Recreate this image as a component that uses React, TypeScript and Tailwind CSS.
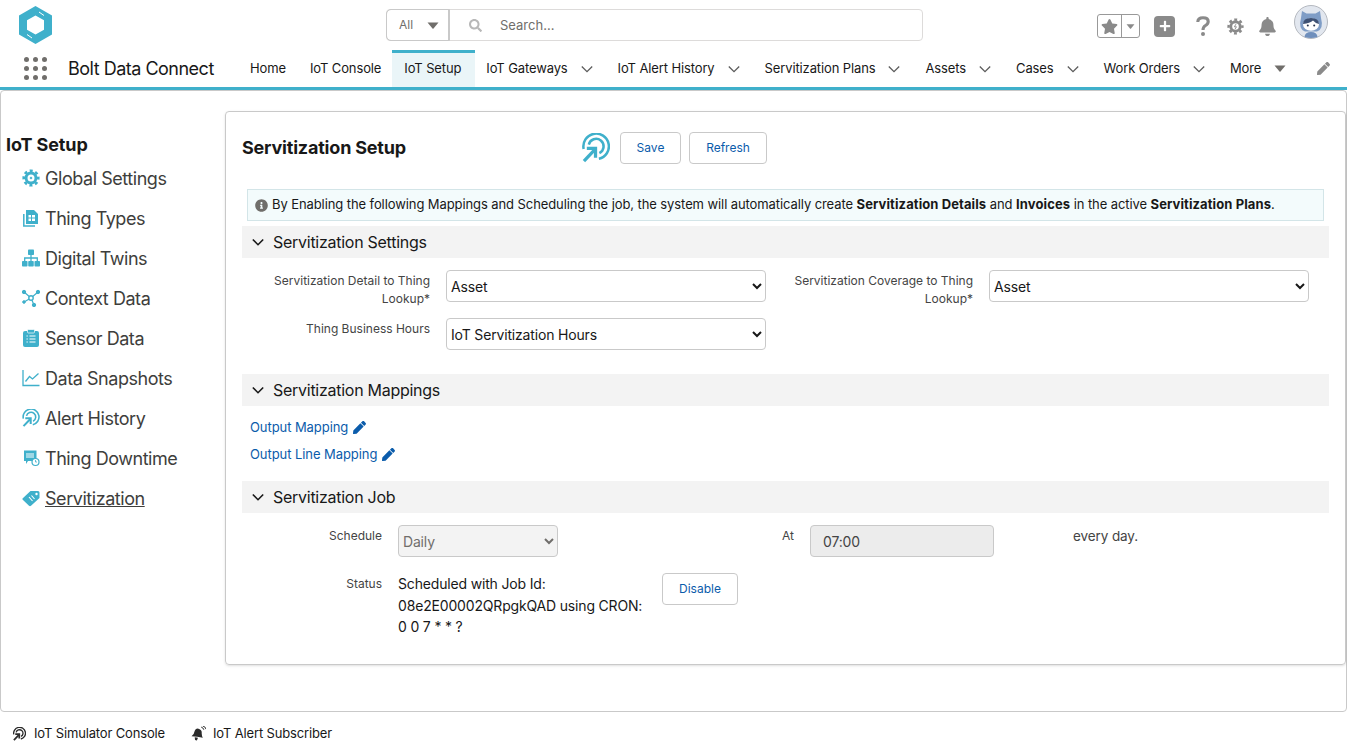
import React from "react";
import { FaBell, FaPen, FaInfoCircle, FaSearch, FaPlus, FaStar } from "react-icons/fa";

const teal = "#3fb0cb";

function Radar({ className = "", color = teal, sw = 2.6 }: { className?: string; color?: string; sw?: number }) {
  return (
    <svg viewBox="0 0 29 30" className={className} fill="none" stroke={color}>
      <path d="M1.700 16 A13.200 13.200 0 1 1 17.500 26.200" strokeWidth={sw} />
      <path d="M7 11.500 A7.800 7.800 0 1 1 18 20.300" strokeWidth={sw} />
      <path d="M2 28.500 L13 17" strokeWidth={sw * 1.3} />
      <path d="M5 15.500 H14 V25" strokeWidth={sw * 1.3} />
    </svg>
  );
}

function Gear({ className = "", color = teal, bolt }: { className?: string; color?: string; bolt?: boolean }) {
  return (
    <svg viewBox="0 0 18 18" className={className} fill="none" stroke={color}>
      <circle cx="9" cy="9" r="7.300" strokeWidth="2.600" strokeDasharray="3 2.730" strokeDashoffset="1.500" />
      <circle cx="9" cy="9" r="5" strokeWidth="3" />
      {bolt ? (
        <path d="M9.500 6.500 L7.800 9.300 H10 L8.500 11.800" strokeWidth="1" />
      ) : (
        <circle cx="9" cy="9" r="1" fill={color} strokeWidth="0.500" />
      )}
    </svg>
  );
}

function Triangle({ className = "", color = "#706e6b" }: { className?: string; color?: string }) {
  return (
    <svg viewBox="0 0 12 7" className={className} fill={color}>
      <path d="M0.500 0.500 H11.500 L6.500 6.500 Q6 7 5.500 6.500 Z" />
    </svg>
  );
}

function Logo() {
  return (
    <svg viewBox="0 0 33 38" className="w-[33px] h-[38px]">
      <path fillRule="evenodd" fill={teal} d="M16.500 0 L33 9.500 V28.500 L16.500 38 L0 28.500 V9.500 Z M16.500 9.500 L8 14.300 V23.700 L16.500 28.500 L25 23.700 V14.300 Z" />
      <path d="M20 6 L25 9.500 M13 32 L8 28.500" stroke="#ffffff" strokeWidth="1" />
    </svg>
  );
}

function Launcher() {
  const dots = [0, 1, 2, 3, 4, 5, 6, 7, 8];
  return (
    <div className="grid grid-cols-3 gap-x-[4px] gap-y-[4px] w-[23px]">
      {dots.map((d) => (
        <span key={d} className="w-[5px] h-[5px] rounded-full bg-[#706e6b]" />
      ))}
    </div>
  );
}

function Avatar() {
  return (
    <svg viewBox="0 0 34 34" className="w-[34px] h-[34px]">
      <circle cx="17" cy="17" r="16.500" fill="#e2e7ef" stroke="#b4b8bf" />
      <path d="M8 6 L12.500 8.500 H21.500 L26 6 L27 13 Q30 24 23 26.500 H11 Q4 24 7 13 Z" fill="#7f9dc6" />
      <ellipse cx="17" cy="19.500" rx="8" ry="6.200" fill="#ffffff" />
      <path d="M9 19 Q9 13 17 13 Q25 13 25 19 Q21 18 19 15.500 Q16 18 9 19 Z" fill="#3f5274" />
      <circle cx="13.800" cy="20.500" r="1" fill="#26324b" />
      <circle cx="20.200" cy="20.500" r="1" fill="#26324b" />
      <path d="M10.500 32 Q11 27 17 27 Q23 27 23.500 32 Q17 34 10.500 32 Z" fill="#6f8fbc" />
    </svg>
  );
}

function Chevron({ className = "", color = "#5c5c5c", sw = 1.300 }: { className?: string; color?: string; sw?: number }) {
  return (
    <svg viewBox="0 0 12 12" className={className} fill="none" stroke={color} strokeWidth={sw}>
      <path d="M0.800 3.500 L6 8.700 L11.200 3.500" />
    </svg>
  );
}

function NavItem({ label, chev, active, caret }: { label: string; chev?: boolean; active?: boolean; caret?: boolean }) {
  return (
    <div className={active ? "h-[37px] flex items-center px-3 pb-[3px] border-t-[3px] border-[#3fb0cb] bg-[#eaf5f8] w-[83px] mx-[-1px]" : "h-[37px] flex items-center px-3"}>
      <span className="text-[13px] leading-none tracking-[-0.12px] text-[#181818] whitespace-nowrap">{label}</span>
      {chev && <Chevron className="w-[12px] h-[12px] ml-[13px] mr-[1px]" />}
      {caret && <Triangle className="w-[12px] h-[7px] ml-[13px] mr-[1px]" />}
    </div>
  );
}

function SideIcon({ name }: { name: string }) {
  const c = "w-[18px] h-[18px]";
  switch (name) {
    case "gear":
      return <Gear className={c} />;
    case "types":
      return (
        <svg viewBox="0 0 18 18" className={c} fill={teal}>
          <path d="M4 1 H12 L16 5 V15 H4 Z M6.500 6 V8.500 H9 V6 Z M10 6 V8.500 H13 V6 Z M6.500 9.500 V12 H9 V9.500 Z M10 9.500 V12 H13 V9.500 Z" fillRule="evenodd" />
          <path d="M1.800 5 V17 H13" fill="none" stroke={teal} strokeWidth="1.500" />
        </svg>
      );
    case "twins":
      return (
        <svg viewBox="0 0 18 18" className={c} fill={teal}>
          <rect x="6" y="0.500" width="6" height="5.500" rx="0.800" />
          <rect x="0" y="12" width="5.500" height="5.500" rx="0.800" />
          <rect x="6.250" y="12" width="5.500" height="5.500" rx="0.800" />
          <rect x="12.500" y="12" width="5.500" height="5.500" rx="0.800" />
          <path d="M9 6 V12 M2.700 12 V9 H15.300 V12" fill="none" stroke={teal} strokeWidth="1.300" />
        </svg>
      );
    case "context":
      return (
        <svg viewBox="0 0 18 18" className={c} fill={teal} stroke={teal}>
          <path d="M2 3 L9 9 L16 3 M9 9 L12 16 M9 9 L2 13" strokeWidth="1.200" fill="none" />
          <circle cx="2" cy="3" r="1.700" />
          <circle cx="16" cy="3" r="1.700" />
          <circle cx="12" cy="16" r="1.700" />
          <circle cx="2" cy="13" r="1.300" />
          <circle cx="9" cy="9" r="2.200" fill="#ffffff" strokeWidth="1.400" />
        </svg>
      );
    case "sensor":
      return (
        <svg viewBox="0 0 18 18" className={c}>
          <rect x="1" y="2" width="16" height="16" rx="2" fill={teal} />
          <rect x="5.500" y="0.500" width="7" height="3.500" rx="1" fill={teal} stroke="#ffffff" strokeWidth="0.700" />
          <path d="M4.500 7 H5.800 M7.500 7 H13.500 M4.500 10 H5.800 M7.500 10 H13.500 M4.500 13 H5.800 M7.500 13 H13.500" stroke="#ffffff" strokeWidth="1.200" />
        </svg>
      );
    case "snap":
      return (
        <svg viewBox="0 0 18 18" className={c} fill="none" stroke={teal} strokeWidth="1.300">
          <path d="M1 1 V16.500 H17.500" />
          <path d="M3.500 12.500 L7.500 7.500 L10.500 10 L16.500 4.500" />
        </svg>
      );
    case "alert":
      return <Radar className={c} sw={2.600} />;
    case "down":
      return (
        <svg viewBox="0 0 18 18" className={c}>
          <path d="M2 1.500 H14.500 V12 H6 L4 15 V12 H2 Z" fill={teal} />
          <path d="M5 4 V9 M7 4 V9 M9 4 V9 M11 4 V9" stroke="#ffffff" strokeWidth="1" />
          <circle cx="13.500" cy="13" r="3.500" fill="#ffffff" stroke={teal} strokeWidth="1.200" />
          <path d="M13.500 11 V13 H15" fill="none" stroke={teal} strokeWidth="0.800" />
        </svg>
      );
    default:
      return (
        <svg viewBox="0 0 18 18" className={c}>
          <path d="M0.500 9.500 L8.500 2 H16 Q17.500 2 17.500 3.500 V9 L9 16.800 Q8 17.500 7 16.800 L1 11 Q0 10.200 0.500 9.500 Z" fill={teal} />
          <path d="M7 8 L10.500 12 M9.500 6.500 L12.500 10" stroke="#ffffff" strokeWidth="1.100" />
          <circle cx="14.500" cy="5" r="1.200" fill="#ffffff" />
        </svg>
      );
  }
}

const side: [string, string][] = [
  ["gear", "Global Settings"],
  ["types", "Thing Types"],
  ["twins", "Digital Twins"],
  ["context", "Context Data"],
  ["sensor", "Sensor Data"],
  ["snap", "Data Snapshots"],
  ["alert", "Alert History"],
  ["down", "Thing Downtime"],
  ["tag", "Servitization"],
];

function Btn({ label, w }: { label: string; w: string }) {
  return (
    <button className={`${w} h-[32px] rounded-[4px] border border-[#c9c9c9] bg-white text-[12px] text-[#0b5cab]`}>{label}</button>
  );
}

function Section({ label }: { label: string }) {
  return (
    <div className="h-[32px] bg-[#f3f3f3] flex items-center pl-[10px]">
      <Chevron className="w-[12px] h-[12px]" color="#181818" sw={1.600} />
      <span className="ml-[9px] text-[16px] tracking-[-0.27px] text-[#181818]">{label}</span>
    </div>
  );
}

function Sel({ value, w, disabled }: { value: string; w: string; disabled?: boolean }) {
  return (
    <select
      disabled={disabled}
      defaultValue={value}
      className={`${w} h-[32px] rounded-[4px] border border-[#c9c9c9] text-[14px] tracking-[-0.17px] ${disabled ? "bg-[#f3f3f3] text-[#706e6b]" : "bg-white text-[#181818]"}`}
      style={{ appearance: "auto" }}
    >
      <option>{value}</option>
    </select>
  );
}

function Label({ children, w }: { children: React.ReactNode; w: string }) {
  return <div className={`${w} text-right text-[12px] leading-[18px] text-[#444444] pt-[2px]`}>{children}</div>;
}

export default function App() {
  return (
    <div className="w-[1347px] h-[753px] bg-white overflow-hidden flex flex-col" style={{ fontFamily: "Inter, 'Noto Sans', sans-serif" }}>
      <header className="h-[50px] flex items-start shrink-0">
        <div className="ml-[19px] mt-[6px]"><Logo /></div>
        <div className="ml-[334px] mt-[9px] w-[537px] h-[32px] rounded-[4px] border border-[#dddbda] flex">
          <div className="w-[62px] flex items-center border-r border-[#c9c9c9] pl-[12px] rounded-l-[4px] outline outline-1 outline-[#c9c9c9]">
            <span className="text-[12px] text-[#706e6b]">All</span>
            <Triangle className="ml-[14px] w-[12px] h-[7px]" />
          </div>
          <div className="flex items-center pl-[20px]">
            <FaSearch className="w-[13px] h-[13px] text-[#b8b8b8]" />
            <span className="ml-[18px] mt-[2px] text-[13px] text-[#706e6b]">Search...</span>
          </div>
        </div>
        <div className="ml-[174px] mt-[5px] flex items-center">
          <div className="mt-[8px] w-[43px] h-[24px] rounded-[3px] border border-[#999999] flex">
            <div className="w-[24px] flex items-center justify-center border-r border-[#999999]"><FaStar className="w-[17px] h-[17px] text-[#8a8a8a]" /></div>
            <div className="flex-1 flex items-center justify-center"><Triangle className="w-[9px] h-[5px]" color="#8a8a8a" /></div>
          </div>
          <div className="ml-[14px] mt-[8px] w-[21px] h-[21px] rounded-[4px] bg-[#8a8a8a] flex items-center justify-center"><FaPlus className="w-[12px] h-[12px] text-white" /></div>
          <svg viewBox="0 0 14 20" className="ml-[21px] mt-[8px] w-[14px] h-[20px]" fill="none" stroke="#8a8a8a" strokeWidth="3.100">
            <path d="M1.800 6 Q1.800 1.800 7 1.800 Q12.200 1.800 12.200 5.500 Q12.200 8 9.500 9.500 Q7 11 7 14" />
            <circle cx="7" cy="18" r="2" fill="#8a8a8a" stroke="none" />
          </svg>
          <Gear className="ml-[17px] mt-[8px] w-[17px] h-[17px]" color="#8a8a8a" bolt />
          <FaBell className="ml-[14px] mt-[8px] w-[19px] h-[19px] text-[#8a8a8a]" />
          <div className="ml-[17px]"><Avatar /></div>
        </div>
      </header>

      <nav className="h-[37px] flex items-center shrink-0">
        <div className="ml-[24px]"><Launcher /></div>
        <div className="ml-[21px] w-[170px] text-[18px] tracking-[-0.5px] text-[#181818] whitespace-nowrap">Bolt Data Connect</div>
        <NavItem label="Home" />
        <NavItem label="IoT Console" />
        <NavItem label="IoT Setup" active />
        <NavItem label="IoT Gateways" chev />
        <NavItem label="IoT Alert History" chev />
        <NavItem label="Servitization Plans" chev />
        <NavItem label="Assets" chev />
        <NavItem label="Cases" chev />
        <NavItem label="Work Orders" chev />
        <NavItem label="More" caret />
        <FaPen className="ml-[18px] w-[13px] h-[13px] text-[#8a8a8a]" />
      </nav>

      <div className="h-[3px] bg-[#3fb0cb] shrink-0" />

      <main className="h-[622px] shrink-0 border border-[#c9c9c9] rounded-[4px] flex">
        <aside className="w-[224px] shrink-0 pt-[43px] pl-[5px]">
          <div className="text-[18px] font-bold leading-[22px] tracking-[-0.1px] text-[#181818]">IoT Setup</div>
          <div className="mt-[2px] flex flex-col">
            {side.map(([i, l]) => (
              <div key={i} className="h-[40px] flex items-center pl-[16px]">
                <SideIcon name={i} />
                <span className={`ml-[5px] text-[18px] tracking-[-0.45px] text-[#3e3e3c] ${i === "tag" ? "underline" : ""}`}>{l}</span>
              </div>
            ))}
          </div>
        </aside>

        <section className="mt-[20px] w-[1121px] h-[554px] border border-[#c9c9c9] rounded-[4px] shadow-sm px-[16px]">
          <div className="flex items-center pt-[20px] h-[52px]">
            <h1 className="w-[340px] text-[18px] font-bold tracking-[-0.2px] leading-[28px] mt-[-1px] text-[#181818] whitespace-nowrap">Servitization Setup</h1>
            <Radar className="w-[28px] h-[30px]" />
            <div className="ml-[10px]"><Btn label="Save" w="w-[61px]" /></div>
            <div className="ml-[8px]"><Btn label="Refresh" w="w-[78px]" /></div>
          </div>

          <div className="mt-[25px] ml-[5px] w-[1077px] h-[32px] border border-[#d3e5e8] bg-[#f3fbfc] flex items-center pl-[7px] text-[13px] tracking-[-0.09px] text-[#181818] whitespace-nowrap">
            <FaInfoCircle className="w-[13px] h-[13px] text-[#706e6b] mr-[4px]" />
            <span>By Enabling the following Mappings and Scheduling the job, the system will automatically create <b className="tracking-[0.1px]">Servitization Details</b> and <b className="tracking-[0.1px]">Invoices</b> in the active <b className="tracking-[0.1px]">Servitization Plans</b>.</span>
          </div>

          <div className="mt-[5px] w-[1087px]"><Section label="Servitization Settings" /></div>

          <div className="mt-[12px] flex h-[32px]">
            <Label w="w-[188px]">Servitization Detail to Thing Lookup*</Label>
            <div className="ml-[16px]"><Sel value="Asset" w="w-[320px]" /></div>
            <Label w="w-[207px]">Servitization Coverage to Thing Lookup*</Label>
            <div className="ml-[16px]"><Sel value="Asset" w="w-[320px]" /></div>
          </div>
          <div className="mt-[16px] flex">
            <Label w="w-[188px]">Thing Business Hours</Label>
            <div className="ml-[16px]"><Sel value="IoT Servitization Hours" w="w-[320px]" /></div>
          </div>

          <div className="mt-[24px] w-[1087px]"><Section label="Servitization Mappings" /></div>

          <div className="mt-[12px] pl-[8px] flex flex-col gap-[9px] text-[13px] tracking-[-0.07px] leading-[18px] text-[#0b5cab]">
            <div className="flex items-center">Output Mapping<FaPen className="ml-[5px] w-[13px] h-[13px]" /></div>
            <div className="flex items-center">Output Line Mapping<FaPen className="ml-[5px] w-[13px] h-[13px]" /></div>
          </div>

          <div className="mt-[18px] w-[1087px]"><Section label="Servitization Job" /></div>

          <div className="mt-[12px] flex">
            <Label w="w-[140px]">Schedule</Label>
            <div className="ml-[16px]"><Sel value="Daily" w="w-[160px]" disabled /></div>
            <Label w="w-[236px]">At</Label>
            <div className="ml-[16px] w-[184px] h-[32px] rounded-[4px] border border-[#c9c9c9] bg-[#ececec] flex items-center pl-[12px] text-[14px] tracking-[-0.17px] text-[#444444]">07:00</div>
            <div className="ml-[79px] text-[13.5px] tracking-[-0.1px] text-[#444444] pt-[1px]">every day.</div>
          </div>
          <div className="mt-[16px] flex">
            <Label w="w-[140px]">Status</Label>
            <div className="ml-[16px] w-[264px] text-[14px] tracking-[-0.17px] leading-[21.500px] text-[#181818]">
              Scheduled with Job Id:<br />08e2E00002QRpgkQAD using CRON:<br />0 0 7 * * ?
            </div>
            <Btn label="Disable" w="w-[76px]" />
          </div>
        </section>
      </main>

      <footer className="h-[41px] flex items-center shrink-0 pl-[13px] pt-[2px] text-[13px] tracking-[-0.15px] text-[#181818]">
        <Radar className="w-[13px] h-[14px]" color="#2b2b2b" sw={3} />
        <span className="ml-[8px]">IoT Simulator Console</span>
        <svg viewBox="0 0 14 14" className="ml-[26px] w-[15px] h-[15px]" fill="#2b2b2b">
          <path d="M0.500 9.500 Q3 8 3.500 4.500 Q4.500 2 7 2.500 Q10.500 3.500 10 7 Q10 9 11 11 Q6 9.500 0.500 9.500 Z" />
          <path d="M3.500 10.500 L6.500 11 L5.500 13.500 L3.800 13 Z" />
          <path d="M9.500 1 Q11.500 1.500 12 3.500 M11 0 Q13.500 0.500 14 3" fill="none" stroke="#2b2b2b" strokeWidth="0.900" />
        </svg>
        <span className="ml-[7px]">IoT Alert Subscriber</span>
      </footer>
    </div>
  );
}
